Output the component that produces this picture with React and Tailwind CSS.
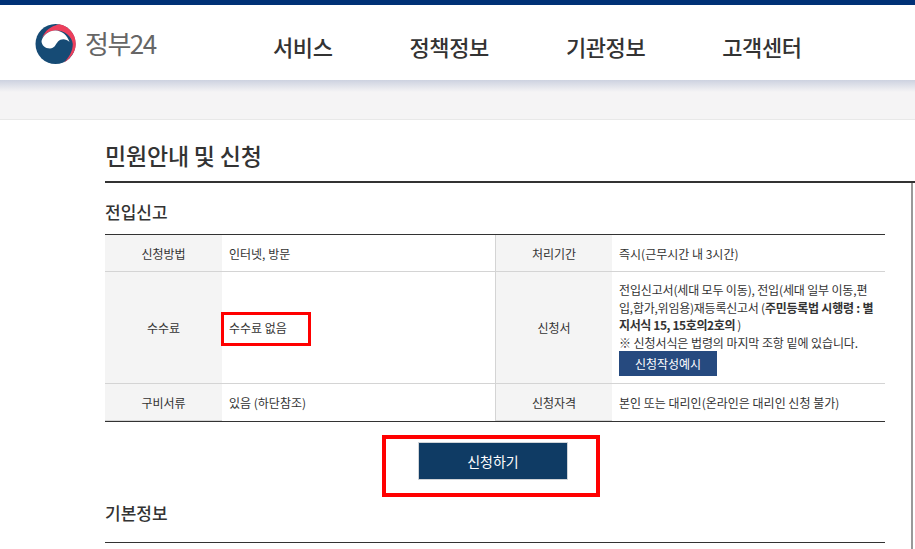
const font = { fontFamily: '"Noto Sans CJK KR", "Noto Sans", sans-serif' };

function Logo() {
  return (
    <div className="flex items-center gap-[8px]">
      <svg width="42" height="42" viewBox="0 0 42 42" className="shrink-0">
        <circle cx="20.5" cy="21" r="20" fill="#164b75" />
        <path d="M7 15C10 8 15 3.5 24 1.3A20 20 0 0 1 40.8 21C40.8 29 35 36 28.5 39.8C34 35 37.8 28 37.8 21C37 13.5 30 7.5 21 7.5C15 7.5 10 10.5 7 15Z" fill="#ec3f5c" />
        <path d="M6.5 18C8 12 14 7.5 20.5 7.5C27 7.5 32.5 12.5 34.5 19C31 15.5 26 15.5 23 18.5C20.5 21.5 19.5 25.5 15 25.5C10 25.5 6.5 22 6.5 18Z" fill="#ffffff" />
      </svg>
      <span className="text-[26px] leading-none tracking-[-1.5px] text-[#666] font-normal -translate-y-px">정부24</span>
    </div>
  );
}

function Th({ children }) {
  return (
    <div className="bg-[#f4f4f4] flex items-center justify-center text-[12px] text-[#333] border-b border-[#d4d4d4] pt-[1px]">
      {children}
    </div>
  );
}

function Td({ children, right = false, bottom = true }) {
  return (
    <div className={`flex items-center pl-[7px] pt-[1px] text-[12px] text-[#333] ${right ? '' : 'border-r border-[#d4d4d4]'} ${bottom ? 'border-b border-[#d4d4d4]' : ''}`}>
      {children}
    </div>
  );
}

export default function App() {
  return (
    <div className="relative w-[915px] h-[549px] overflow-hidden bg-white" style={font}>
      <div className="h-[5px] bg-[#003176]" />
      <header className="h-[75px] bg-white flex items-start">
        <div className="w-[235px] pl-[35px] pt-[18px]">
          <Logo />
        </div>
        <nav className="flex pl-[38px] pt-[26px] gap-[77px] text-[22px] leading-[30px] font-medium tracking-[-0.4px] text-[#333]">
          <span>서비스</span>
          <span>정책정보</span>
          <span>기관정보</span>
          <span>고객센터</span>
        </nav>
      </header>
      <div className="h-[40px] border-b border-[#e8e8e8] bg-[linear-gradient(#cdd2e0_0px,#f5f4f5_12px)]" />

      <main className="pl-[105px]">
        <h1 className="h-[63px] border-b-2 border-[#333] pt-[18px] text-[23px] leading-[34px] font-medium tracking-[-0.2px] text-[#333]">민원안내 및 신청</h1>
        <div className="w-[780px]">
          <h2 className="h-[51px] pt-[16px] text-[17px] leading-[26px] font-medium text-[#333]">전입신고</h2>
          <div className="grid grid-cols-[117px_274px_116px_273px] grid-rows-[37px_112px_37px] border-t border-b border-[#333] h-[188px]">
            <Th>신청방법</Th>
            <Td>인터넷, 방문</Td>
            <Th>처리기간</Th>
            <Td right>즉시(근무시간 내 3시간)</Td>

            <Th>수수료</Th>
            <Td>수수료 없음</Td>
            <Th>신청서</Th>
            <Td right>
              <div className="pt-[1px]">
                <p className="leading-[18px] tracking-[-0.16px]">전입신고서(세대 모두 이동), 전입(세대 일부 이동,편</p>
                <p className="leading-[17px] tracking-[-0.24px]">입,합가,위임용)재등록신고서 (<b className="font-bold">주민등록법 시행령 : 별</b></p>
                <p className="leading-[18px] tracking-[-0.4px]"><b className="font-bold">지서식 15, 15호의2호의</b> )</p>
                <p className="leading-[17px] tracking-[-0.08px]">※ 신청서식은 법령의 마지막 조항 밑에 있습니다.</p>
                <div className="w-[98px] h-[25px] bg-[#264a7f] text-white flex items-center justify-center">신청작성예시</div>
              </div>
            </Td>

            <Th>구비서류</Th>
            <Td bottom={false}>있음 (하단참조)</Td>
            <Th>신청자격</Th>
            <Td right bottom={false}>본인 또는 대리인(온라인은 대리인 신청 불가)</Td>
          </div>
          <div className="flex justify-center pt-[20px] pr-[4px]">
            <button className="w-[150px] h-[38px] bg-[#0f3b64] border border-[#d0d4d8] text-white text-[14px]">신청하기</button>
          </div>
          <h2 className="mt-[20px] h-[43px] border-b border-[#333] text-[17px] leading-[25px] font-medium text-[#333]">기본정보</h2>
        </div>
      </main>

      <div className="absolute left-[911px] top-[183px] bottom-0 w-[2px] bg-[#999]" />
      <div className="absolute left-[221px] top-[312px] w-[90px] h-[34px] border-[3px] border-[#f00]" />
      <div className="absolute left-[382px] top-[435px] w-[218px] h-[62px] border-[4px] border-[#f00]" />
    </div>
  );
}
